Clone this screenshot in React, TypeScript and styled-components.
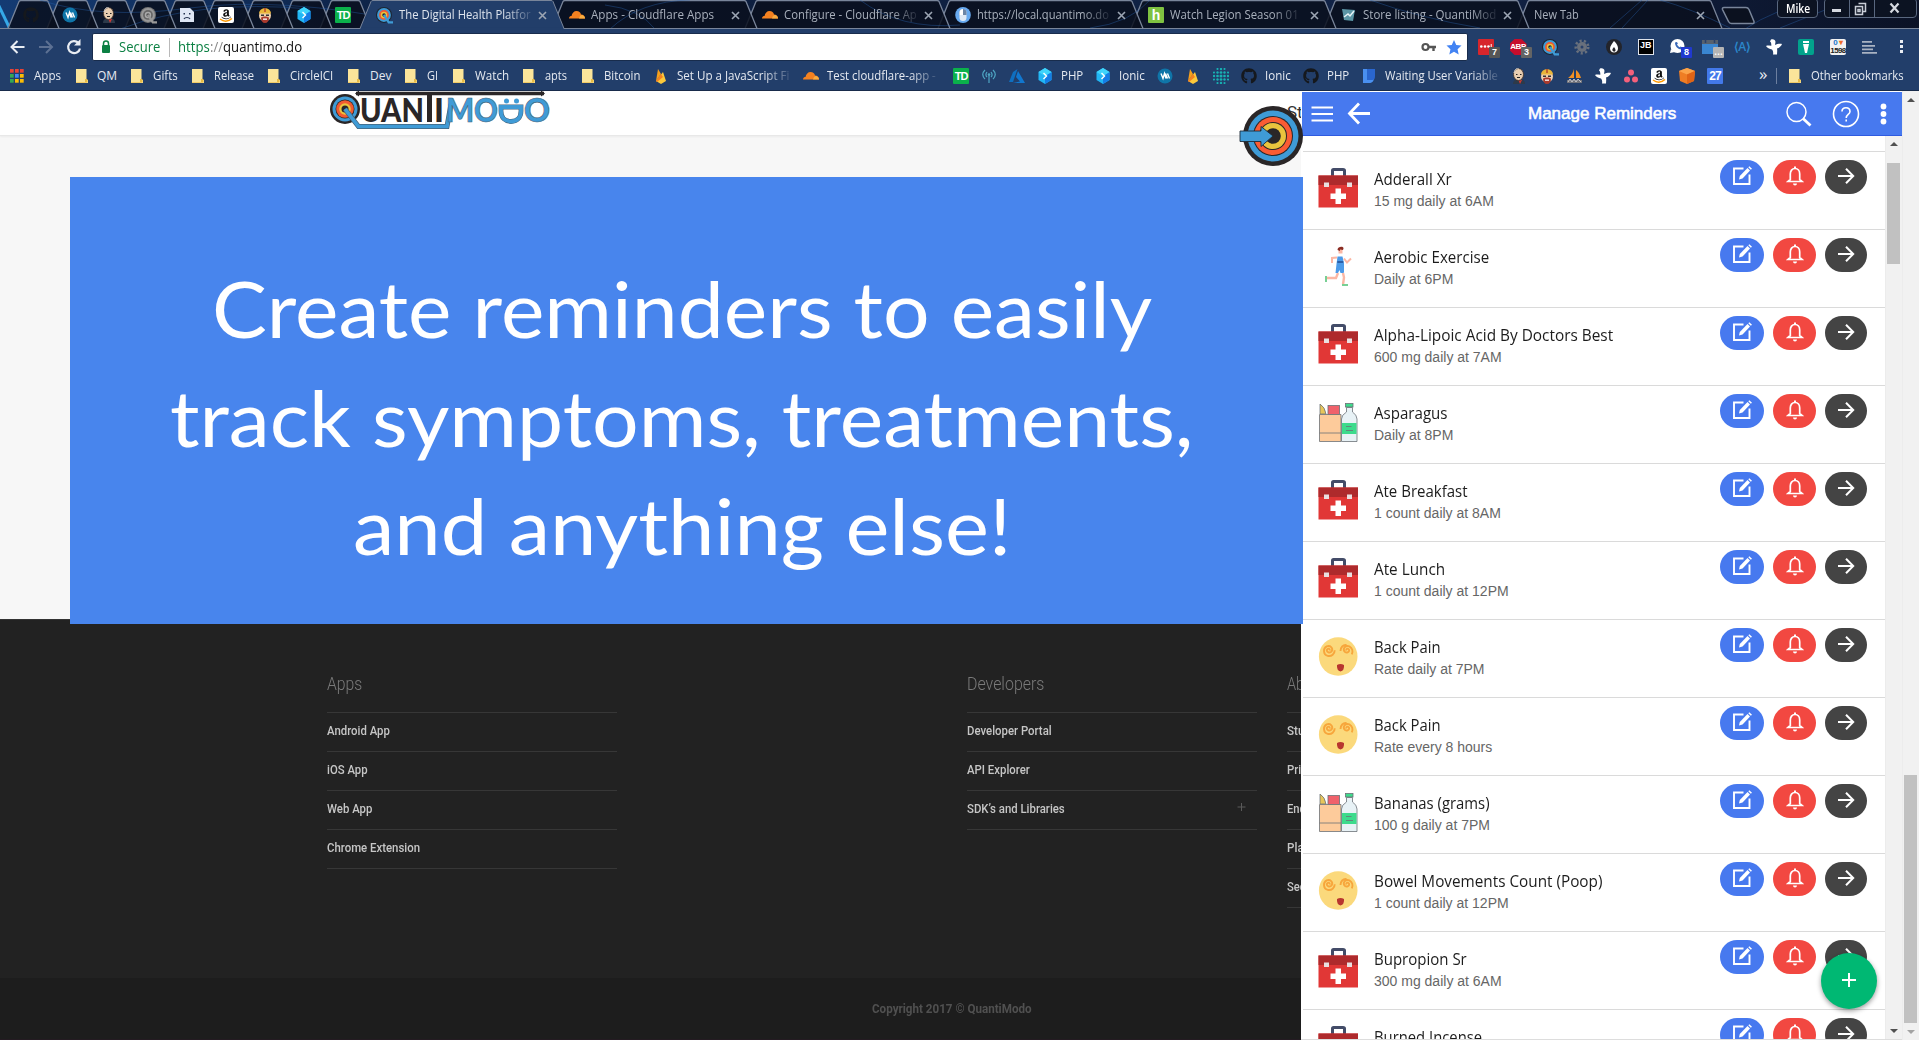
import React, { useLayoutEffect, useRef, useState } from 'react';
import styled, { createGlobalStyle } from 'styled-components';
import { FaGithub, FaAmazon } from 'react-icons/fa';

const Global = createGlobalStyle`
  * { box-sizing: border-box; }
  html, body { margin: 0; padding: 0; overflow: hidden; background: #f7f7f7; }
  svg { display: block; flex: none; }
`;

const UI = '"Open Sans", "Noto Sans", sans-serif';
const ARIAL = '"Liberation Sans", Arial, sans-serif';
const ROBOTO = 'Roboto, "Liberation Sans", sans-serif';

/* Text squeezed or widened to a known advance width */
const FitBox = styled.span<{ $w: number; $fade?: boolean }>`
  display: block;
  flex: none;
  width: ${p => p.$w}px;
  white-space: pre;
  ${p => p.$fade && `
    overflow: hidden;
    mask-image: linear-gradient(90deg, #000 ${p.$w - 26}px, rgba(0,0,0,.15) 100%);
  `}
`;
const FitInner = styled.span`
  display: inline-block;
  transform-origin: 0 50%;
`;
function Fit({ w, fade, children }: { w: number; fade?: boolean; children: string }) {
  const ref = useRef<HTMLSpanElement>(null);
  const [scale, setScale] = useState(1);
  useLayoutEffect(() => {
    if (ref.current) setScale(w / ref.current.offsetWidth);
  }, [w, children]);
  return (
    <FitBox $w={w} $fade={fade}>
      <FitInner ref={ref} style={{ transform: `scaleX(${scale})` }}>{children}</FitInner>
    </FitBox>
  );
}

/* ---------- small browser icons ---------- */
function Target16({ grey }: { grey?: boolean }) {
  const c = grey ? ['#777', '#999', '#666', '#aaa', '#555'] : ['#1d2531', '#3f9bd6', '#f15a31', '#eac43d', '#1d2531'];
  return (
    <svg width="17" height="17" viewBox="0 0 16 16">
      <circle cx="7.5" cy="7.5" r="7.5" fill={c[0]} /><circle cx="7.5" cy="7.5" r="6.5" fill={c[1]} />
      <circle cx="7.5" cy="7.5" r="4.6" fill={c[2]} /><circle cx="7.5" cy="7.5" r="3" fill={c[3]} />
      <circle cx="7.5" cy="7.5" r="1.6" fill={c[4]} /><path d="M7.5 7.5L12 14.5H16" stroke={c[1]} strokeWidth="2.2" fill="none" />
    </svg>
  );
}
const Letter = styled.span<{ $bg: string; $c?: string; $s?: number }>`
  display: flex; align-items: center; justify-content: center; flex: none;
  width: 16px; height: 16px; border-radius: 1px;
  background: ${p => p.$bg}; color: ${p => p.$c || '#fff'};
  font: 700 ${p => p.$s || 11}px/16px ${ARIAL}; letter-spacing: -1px;
`;
function Glyph({ n }: { n: string }) {
  const S = (kids: React.ReactNode, w = 16) => <svg width={w} height={w} viewBox="0 0 16 16">{kids}</svg>;
  switch (n) {
    case 'github': return <FaGithub size={16} color="#15181d" />;
    case 'wave': return S(<><circle cx="8" cy="8" r="7.5" fill="#0f75a8" /><path d="M4 5.5l2 5 1.5-5 1.5 5M8.500 5.500l2 5M10.500 5.500l2 5" stroke="#fff" strokeWidth="1.4" fill="none" /></>);
    case 'jenkins': return S(<><path d="M2 16c0-4 3-5 6-5s6 1 6 5z" fill="#2d3a4a" /><path d="M7 11l2 5 2-4z" fill="#d33833" /><ellipse cx="7.500" cy="6.500" rx="5" ry="6" fill="#e8cdb0" stroke="#3b2b22" strokeWidth=".8" /><path d="M3 5c1-4 3-5 5-5" stroke="#ddd" fill="none" /><path d="M5 6.500h1.500M9 6.500h1.500M6 9.500h3" stroke="#222" strokeWidth="1" /></>);
    case 'target': return <Target16 />;
    case 'targetgrey': return <Target16 grey />;
    case 'sad': return S(<><path d="M1 1h10l4 4v10H1z" fill="#dfe7f5" /><path d="M4.500 6h1.500v1.500H4.500zM10 6h1.500v1.500H10z" fill="#23324f" /><path d="M5 12c1-2 5-2 6 0" stroke="#23324f" fill="none" strokeWidth="1.200" /></>);
    case 'amazon': return S(<><rect width="16" height="16" rx="2" fill="#fff" /><g transform="translate(2.500 1.500)"><FaAmazon size={11.500} color="#111" /></g><path d="M2 12c4 3 8 3 12-.5" stroke="#f90" strokeWidth="1.500" fill="none" /></>);
    case 'worker': return S(<><circle cx="8" cy="8.500" r="6" fill="#f0d0ae" /><path d="M2 6.500C2.500 -.5 13.500 -.5 14 6.500z" fill="#e9b63a" /><path d="M8 1v4" stroke="#b5482a" strokeWidth="1.500" /><path d="M4 10.500c2-1.500 6-1.500 8 0 0 3.500-1.500 5.500-4 5.500s-4-2-4-5.500z" fill="#a93a2d" /><path d="M4 7.500h3v1.500H4zM9 7.500h3v1.500H9z" fill="#333" /><path d="M6 11.500h4v1.300H6z" fill="#fff" /></>);
    case 'hex': return S(<><path d="M8 0l6.500 4v8L8 16l-6.500-4V4z" fill="#21b6f5" /><path d="M8 8l6.500-4v8L8 16z" fill="#157de6" /><path d="M1.500 4L8 0l6.500 4L8 8z" fill="#3fd4fb" /><path d="M6.500 5l3 3-3 3" stroke="#fff" strokeWidth="1.400" fill="none" /></>);
    case 'td': return <Letter $bg="#0bb14b">TD</Letter>;
    case 'cloud': return S(<><path d="M0 11.500c0-2 1.500-2.500 2.500-2.500C3 6 5 4 7.500 4c2.500 0 4 1.500 4.500 3.500 2.500 0 4 2 4 4z" fill="#f48120" /><path d="M10 11.500c.5-2 1.500-3.500 3-3.500 2 .3 3 2 3 3.500z" fill="#faad3f" /></>);
    case 'mouse': return S(<><ellipse cx="8" cy="8" rx="7.800" ry="8" fill="#68aaf0" /><rect x="4.500" y="2" width="7" height="12" rx="3.500" fill="#dfe9f5" /><path d="M4.500 8V5.500a3.500 3.500 0 017 0V8z" fill="#6d86a6" /><path d="M4.500 8V5.500A3.500 3.500 0 018 2v6z" fill="#fff" /></>);
    case 'h': return <Letter $bg="#7fc241" $s={14}>h</Letter>;
    case 'store': return S(<><path d="M1 2l13 1-2 11-9-1z" fill="#5b95a5" /><path d="M3 10l4-3 2 2 4-5" stroke="#e8f4f8" strokeWidth="1.500" fill="none" /></>);
    case 'apps': return (
      <svg width="14" height="14" viewBox="0 0 14 14">
        {['#e84335', '#e84335', '#e84335', '#34a853', '#4285f4', '#fbbc05', '#34a853', '#fbbc05', '#fbbc05'].map((c, i) => (
          <rect key={i} x={(i % 3) * 5} y={Math.floor(i / 3) * 5} width="3.700" height="3.700" fill={c} />))}
      </svg>);
    case 'folder': return <svg width="12" height="14" viewBox="0 0 12 14"><path d="M0 0h10.500v11H12v3H0z" fill="#fbe59a" /><path d="M9 10h2.500v3.500H9z" fill="#e8bb45" /><path d="M0 13.500h11" stroke="#f1cb67" /></svg>;
    case 'fire': return S(<><path d="M3 13L5 1l3 5z" fill="#f7a01b" /><path d="M3 13l7-9 3 9-5 3z" fill="#fdc93a" /><path d="M3 13l5-7 2 3-6 5z" fill="#f58220" /></>);
    case 'antenna': return S(<><g stroke="#4fa6c4" fill="none" strokeWidth="1.200"><path d="M4 2C1 5 1 8 4 11M12 2c3 3 3 6 0 9M6 4C4.500 6 4.500 7.500 6 9M10 4c1.500 2 1.500 3.500 0 5M8 7v8" /></g><circle cx="8" cy="6.500" r="1.300" fill="#4fa6c4" /></>);
    case 'azure': return S(<><path d="M8.500 1L4 4 0 14h4z" fill="#0f6fc0" /><path d="M9 3l7 12H4l7-1.500L7 9z" fill="#1177cf" /></>);
    case 'dots': return S([1, 4.5, 8, 11.5, 15].flatMap((x, i) => [1, 4.5, 8, 11.5, 15].map((y, j) => (
      Math.abs(i - 2) + Math.abs(j - 2) < 4 ? <circle key={`${i}-${j}`} cx={x} cy={y} r={1.500 - (Math.abs(i - 2) + Math.abs(j - 2)) * 0.150} fill="#18b1b3" /> : null))));
    case 'doc': return S(<><path d="M2 1h11v9c0 3-2 5-5 5H2z" fill="#4a90f0" /><path d="M6 1h8v7c0 3-1 4-3 4H6z" fill="#2a66cf" /></>);
    case 'pma': return S(<><path d="M7 1v9H1c3-2 5-5 6-9zM9 2c3 2 4 5 5 8H9z" fill="#f29023" /><path d="M0 12h15v3H0z" fill="#70727a" /><path d="M1 14l2-3 2 3 2-3 2 3 2-3 3 3" stroke="#c5c6cb" fill="none" /></>);
    case 'bird': return S(<path d="M5 .5c2-.8 4.500 0 4.500 2.500L9 6c2-1 5-1.500 7-1-1 2.500-3 4-5 4.500.5 2 0 3.500 0 6H7c.5-2 0-4-1-5C3.500 10 1 9 0 7c2-1 4 0 5.500-.5C5 5 5.500 3.500 4 2.500z" fill="#fff" />);
    case 'asana': return S(<g fill="#f4607b"><circle cx="8" cy="4.500" r="3" /><circle cx="4" cy="11.500" r="3" /><circle cx="12" cy="11.500" r="3" /></g>);
    case 'box': return S(<><path d="M8 0l8 3-1 10-7 3-7-3L0 3z" fill="#ef7d24" /><path d="M0 3l8-3 8 3-8 3.500z" fill="#fba349" /><path d="M8 6.500L16 3l-1 10-7 3z" fill="#e06416" /></>);
    case 'cal27': return <Letter $bg="#4379ea" $s={12}>27</Letter>;
    case 'lastpass': return S(<><rect width="16" height="16" rx="1" fill="#d7262c" /><g fill="#fff"><circle cx="3.300" cy="7.500" r="1.300" /><circle cx="7" cy="7.500" r="1.300" /><circle cx="10.500" cy="7.500" r="1.300" /><path d="M12.700 5h1v5h-1z" /></g></>);
    case 'abp': return <Abp>ABP</Abp>;
    case 'gear': return S(<><circle cx="8" cy="8" r="5" fill="#69707c" /><circle cx="8" cy="8" r="6.300" fill="none" stroke="#69707c" strokeWidth="2.500" strokeDasharray="2.200 2.200" /><circle cx="8" cy="8" r="1.500" fill="#29406a" /></>);
    case 'flame': return S(<><circle cx="8" cy="8" r="8" fill="#23242a" /><path d="M8 2c3 3 4 5 4 7.500S10 13.500 8 13.500 4 12 4 9.500 6 5 8 2z" fill="#fff" /><path d="M8 8c1 1.500 1.500 2 1.500 3.500S7 13 6.500 11.500 7 9.500 8 8z" fill="#23242a" /></>);
    case 'jb': return <Jb>JB</Jb>;
    case 'phone': return S(<><circle cx="7.500" cy="7" r="7" fill="#fff" /><path d="M1 10l-1 4 5-1z" fill="#fff" /><path d="M5 3.500c0 4 3 7 6.500 7l1-2-2-1-1 .8C8.500 7.500 7.500 6.500 7 5.500l.9-1-1-1.500z" fill="#3868b8" /></>);
    case 'cal': return S(<><rect y="1" width="16" height="14" fill="#3a86d1" /><rect y="1" width="16" height="4" fill="#56616e" /><path d="M3.500 0v4M12.500 0v4" stroke="#29406a" strokeWidth="1.500" /></>);
    case 'green': return S(<><rect width="16" height="16" rx="2" fill="#02a28c" /><path d="M5 2h6v2H5zM5 5h6l-2 9H7z" fill="#fff" /></>);
    case 'lines': return S(<g fill="#a9b2c2"><path d="M0 2h10v1.800H0zM0 6h13v1.800H0zM0 9.500h11v1.800H0zM0 13h15v1.800H0z" /></g>);
    default: return null;
  }
}
const Abp = styled.span`
  display: flex; align-items: center; justify-content: center; flex: none;
  width: 17px; height: 16px; background: #c70d2c; color: #fff;
  clip-path: polygon(30% 0, 70% 0, 100% 30%, 100% 70%, 70% 100%, 30% 100%, 0 70%, 0 30%);
  font: 700 8px/16px ${ARIAL}; letter-spacing: -.4px;
`;
const Jb = styled.span`
  width: 16px; height: 16px; flex: none; background: #000; border: 1px solid #dfe3ea; color: #fff;
  font: 700 9px/9px ${ARIAL}; padding: 1px 0 0 1px;
`;

/* ---------- tab strip ---------- */
const Screen = styled.div`
  width: 1919px; height: 1040px; overflow: hidden; display: flex; flex-direction: column;
  font-family: ${UI};
`;
const Strip = styled.div`
  position: relative; height: 29px; flex: none; display: flex; padding-left: 11.5px; overflow: hidden;
  background: #0e1c38;
`;
const StripArt = styled.svg`position: absolute; left: 0; top: 0;`;
const Pin = styled.div`
  position: relative; width: 39px; flex: none; display: flex; justify-content: center; align-items: center; padding-top: 1px;
`;
const Tab = styled.div<{ $active?: boolean }>`
  position: relative; width: 193px; flex: none; display: flex; align-items: center; padding: 1px 9px 0 13px; gap: 6px;
  font-size: 12px; line-height: 20px; color: ${p => (p.$active ? '#dfe5ee' : '#a9b0bc')};
`;
const CloseX = styled.svg`margin-left: auto;`;
const UserBadge = styled.div`
  position: absolute; left: 1777px; top: -2px; width: 41px; height: 20px; border: 1px solid #59677f; border-radius: 4px;
  background: #0c1322; color: #fff; font-size: 12px; line-height: 20px; display: flex; justify-content: center; font-weight: 600;
`;
const WinCtl = styled.div`
  position: absolute; left: 1824px; top: -2px; width: 93px; height: 20px; border: 1px solid #59677f; border-radius: 4px;
  background: #0c1322;
`;
const PINS = ['github', 'wave', 'jenkins', 'targetgrey', 'sad', 'amazon', 'worker', 'hex', 'td'];
const TABS: { icon?: string; t: string; w: number; fade?: boolean }[] = [
  { icon: 'target', t: 'The Digital Health Platfor', w: 132, fade: true },
  { icon: 'cloud', t: 'Apps - Cloudflare Apps', w: 123 },
  { icon: 'cloud', t: 'Configure - Cloudflare Ap', w: 133, fade: true },
  { icon: 'mouse', t: 'https://local.quantimo.do', w: 132, fade: true },
  { icon: 'h', t: 'Watch Legion Season 01', w: 129, fade: true },
  { icon: 'store', t: 'Store listing - QuantiMod', w: 133, fade: true },
  { t: 'New Tab', w: 45 },
];
const tabPath = (s: number, w: number) => `M${s - 4} 28.500L${s + 7} 1.500Q${s + 7.500} .5 ${s + 9} .5H${s + w - 5}Q${s + w - 3.500} .5 ${s + w - 3} 1.500L${s + w + 8} 28.500`;
function TabStrip() {
  const shapes = [
    ...PINS.map((_, i) => tabPath(12 + i * 39, 39)),
    ...TABS.slice(1).map((_, i) => tabPath(556 + i * 193, 193)),
  ].reverse();
  return (
    <Strip>
      <StripArt width="1919" height="29">
        <defs>
          <linearGradient id="sk" x1="0" x2="1"><stop offset="0" stopColor="#143b73" /><stop offset=".25" stopColor="#0c1d3c" /><stop offset=".75" stopColor="#122448" /><stop offset="1" stopColor="#0b1226" /></linearGradient>
        </defs>
        <rect width="1919" height="29" fill="url(#sk)" />
        <path d="M-4 0L10 29" stroke="#35a8e8" strokeWidth="3" />
        {shapes.map((d, i) => <path key={i} d={d} fill="#090f1d" fillOpacity=".85" stroke="#79859a" strokeWidth="1.300" />)}
        <g stroke="#2a66b5" fill="none" opacity=".38">
          <path d="M40 0q60 20 150 8t220 14M120 29q80-30 190-20M610 29q30-28 80-29M655 29q-15-20-50-24M860 0q40 30 100 25M1090 28q40-5 60-28M1610 28l32-28M1622 28l26-28M1480 28q-60-10-110-28M1660 0q30 8 70 28M1745 29q30-20 70-28M1780 28l50-20" />
        </g>
        <path d="M0 28.500H1919" stroke="#79859a" />
        <path d="M1724 7.500h22q2 0 3 2l5 12q.5 2-1.500 2h-21q-2 0-3-2l-6-12q-.5-2 1.500-2z" fill="#0b111f" stroke="#79859a" strokeWidth="1.500" />
        <path d={`${tabPath(364, 192)}V30H360z`} fill="#223e6a" stroke="#79859a" />
        <path d="M361 29H563" stroke="#223e6a" strokeWidth="2.500" />
      </StripArt>
      {PINS.map(p => <Pin key={p}><Glyph n={p} /></Pin>)}
      {TABS.map((t, i) => (
        <Tab key={t.t} $active={i === 0}>
          {t.icon && <Glyph n={t.icon} />}
          <Fit w={t.w} fade={t.fade}>{t.t}</Fit>
          <CloseX width="9" height="9"><path d="M1 1l7 7M8 1l-7 7" stroke="#9ca5b3" strokeWidth="1.600" /></CloseX>
        </Tab>
      ))}
      <UserBadge><Fit w={24}>Mike</Fit></UserBadge>
      <WinCtl>
        <svg width="91" height="18">
          <path d="M24.500 0v18M49.500 0v18" stroke="#59677f" />
          <path d="M7 10h9v3H7z" fill="#d5d9e0" />
          <path d="M33.500 4.500h7v8h-3M30.500 7.500h7v8h-7zM33 10.500h2v2h-2z" stroke="#c9ced7" strokeWidth="1.500" fill="none" />
          <path d="M65.500 4.500l8 9M73.500 4.500l-8 9" stroke="#d5d9e0" strokeWidth="2.200" />
        </svg>
      </WinCtl>
    </Strip>
  );
}

/* ---------- toolbar ---------- */
const Toolbar = styled.div`
  height: 32px; flex: none; background: #223e6a; display: flex; align-items: center; padding-top: 4px;
`;
const Nav = styled.div`width: 92px; flex: none;`;
const Omnibox = styled.div`
  width: 1376px; height: 28px; flex: none; background: #fff; border: 1px solid #182c4c; border-radius: 2px; display: flex; align-items: center;
  padding: 0 5px 0 7px; font-size: 14px; line-height: 24px; color: #0b8043;
`;
const Sep = styled.i<{ $c: string; $h: number }>`
  width: 1px; height: ${p => p.$h}px; background: ${p => p.$c}; flex: none;
`;
const Gap = styled.i<{ $w: number }>`width: ${p => p.$w}px; flex: none;`;
const Url = styled.span`display: flex; margin-left: 8px; color: #111;`;
const Scheme = styled.span`color: #0b8043;`;
const Slashes = styled.span`color: #888;`;
const OmniEnd = styled.div`margin-left: auto; display: flex; gap: 9px; align-items: center;`;
const Ext = styled.div`position: relative; width: 32px; flex: none; display: flex; justify-content: center; align-items: center;`;
const Badge = styled.span<{ $bg: string }>`
  position: absolute; left: 19px; top: 8px; width: 11px; height: 11px; border-radius: 1px; background: ${p => p.$bg}; color: #fff;
  font: 700 9px/11px ${ARIAL}; text-align: center;
`;
const ExtText = styled.span`color: #2b86c9; font: 600 12px/16px ${UI}; letter-spacing: -.5px;`;
const Counter = styled.span`
  width: 16px; height: 16px; background: #f2f2f2; border-radius: 2px; color: #222; font: 700 8px/8px ${ARIAL}; text-align: center; letter-spacing: -.6px;
`;
const CounterTop = styled.span`color: #2377c9; display: block; i { color: #ef6c2b; font-style: normal; margin-left: 2px; }`;
const EXTS: { n: string; b?: string; bg?: string }[] = [
  { n: 'lastpass', b: '7', bg: '#565656' }, { n: 'abp', b: '3', bg: '#646464' }, { n: 'target' }, { n: 'gear' }, { n: 'flame' }, { n: 'jb' },
  { n: 'phone', b: '8', bg: '#2039cf' }, { n: 'cal', b: '…', bg: '#b5b5b5' }, { n: 'text' }, { n: 'bird' }, { n: 'green' }, { n: 'count' }, { n: 'lines' },
];
function BrowserToolbar() {
  return (
    <Toolbar>
      <Nav>
        <svg width="92" height="26" viewBox="0 0 92 26" fill="none" strokeWidth="2">
          <path d="M24.500 13H12M17.500 7l-6 6 6 6" stroke="#e9edf3" />
          <path d="M39 13h12.500M46 7l6 6-6 6" stroke="#5d7193" />
          <path d="M78.500 9A6 6 0 1 0 80 14.500" stroke="#e9edf3" strokeWidth="2.200" />
          <path d="M80.500 5v6.500H74z" fill="#e9edf3" />
        </svg>
      </Nav>
      <Omnibox>
        <svg width="19" height="16"><rect x="2" y="6" width="8" height="8" rx="1" fill="#0b8043" /><path d="M3.500 6V4.500a2.500 2.500 0 015 0V6" fill="none" stroke="#0b8043" strokeWidth="1.500" /></svg>
        <Fit w={41}>Secure</Fit>
        <Gap $w={9} /><Sep $c="#b9b9b9" $h={19} />
        <Url><Scheme><Fit w={32}>https</Fit></Scheme><Slashes><Fit w={13}>://</Fit></Slashes><Fit w={79}>quantimo.do</Fit></Url>
        <OmniEnd>
          <svg width="16" height="12"><circle cx="4.500" cy="6" r="3" fill="none" stroke="#555" strokeWidth="2.200" /><path d="M7.500 6H15M12.500 6v4" stroke="#555" strokeWidth="2.400" /></svg>
          <svg width="16" height="15" viewBox="0 0 24 24"><path d="M12 0l3.600 8 8.400.9-6.300 5.700 1.800 8.400L12 18.800 4.500 23l1.800-8.400L0 8.900 8.400 8z" fill="#4283f3" /></svg>
        </OmniEnd>
      </Omnibox>
      <Gap $w={2} />
      {EXTS.map(e => (
        <Ext key={e.n}>
          {e.n === 'text' ? <ExtText>⟨A⟩</ExtText> : e.n === 'count' ? <Counter><CounterTop>0<i>▾</i></CounterTop>1598</Counter> : <Glyph n={e.n} />}
          {e.b && <Badge $bg={e.bg!}>{e.b}</Badge>}
        </Ext>
      ))}
      <Ext><svg width="4" height="14"><g fill="#e9edf3"><rect y="0" width="3" height="3" /><rect y="5" width="3" height="3" /><rect y="10" width="3" height="3" /></g></svg></Ext>
    </Toolbar>
  );
}

/* ---------- bookmarks ---------- */
const Bar = styled.div`
  height: 30px; flex: none; background: #223e6a; border-bottom: 1px solid #182b4b; display: flex; align-items: center; padding-left: 10px;
  font-size: 12px; line-height: 18px; color: #e6eaf1;
`;
const Mark = styled.div<{ $w: number }>`
  width: ${p => p.$w}px; flex: none; display: flex; align-items: center;
`;
const MarkIcon = styled.span<{ $w: number }>`width: ${p => p.$w}px; flex: none; display: flex;`;
/* icon, cell width, icon slot width, label, label width, faded end */
type M = [string, number, number?, string?, number?, boolean?];
const MARKS: M[] = [
  ['apps', 66, 24, 'Apps', 27], ['folder', 55, 21, 'QM', 20], ['folder', 61, 22, 'Gifts', 25], ['folder', 76, 22, 'Release', 40],
  ['folder', 80, 22, 'CircleICI', 43], ['folder', 57, 22, 'Dev', 21], ['folder', 48, 22, 'GI', 11], ['folder', 70, 22, 'Watch', 34],
  ['folder', 59, 22, 'apts', 22], ['folder', 71, 22, 'Bitcoin', 36],
  ['fire', 150, 24, 'Set Up a JavaScript Fi', 112, true], ['cloud', 150, 24, 'Test cloudflare-app -', 109, true],
  ['td', 28], ['antenna', 28], ['azure', 28], ['hex', 58, 24, 'PHP', 22], ['hex', 62, 24, 'Ionic', 26], ['wave', 28], ['fire', 28], ['dots', 28],
  ['github', 62, 24, 'Ionic', 26], ['github', 58, 24, 'PHP', 22], ['doc', 150, 24, 'Waiting User Variable', 113, true],
  ['jenkins', 28], ['worker', 28], ['pma', 28], ['bird', 28], ['asana', 28], ['amazon', 28], ['box', 28], ['cal27', 52],
];
const More = styled.span`width: 17px; font-size: 17px; line-height: 16px; padding-bottom: 3px;`;
function Bookmarks() {
  return (
    <Bar>
      {MARKS.map(([n, w, s, t, tw, f], i) => (
        <Mark key={i} $w={w}>
          <MarkIcon $w={s || 16}><Glyph n={n} /></MarkIcon>
          {t && <Fit w={tw!} fade={f}>{t}</Fit>}
        </Mark>
      ))}
      <More>»</More><Sep $c="#6c7f9f" $h={16} /><Gap $w={12} />
      <MarkIcon $w={22}><Glyph n="folder" /></MarkIcon><Fit w={93}>Other bookmarks</Fit>
    </Bar>
  );
}

/* ---------- web page ---------- */
const Body = styled.div`height: 949px; flex: none; display: flex; background: #f7f7f7;`;
const Site = styled.div`position: relative; width: 1301px; flex: none; display: flex; flex-direction: column;`;
const SiteHeader = styled.header`
  height: 45px; flex: none; background: #fff; border-bottom: 1px solid #e8e8e8; box-shadow: 0 1px 2px rgba(0,0,0,.05);
  display: flex; justify-content: space-between; padding-left: 328px; overflow: hidden;
`;
const NavWord = styled.span`width: 14px; overflow: hidden; white-space: nowrap; font: 400 17px/43px ${ROBOTO}; color: #333;`;
const FloatTarget = styled.svg`position: absolute; left: 1239px; top: 14px; z-index: 3;`;
const Hero = styled.section`
  position: relative; z-index: 2; margin: 41px 0 0 70px; width: 1233px; height: 447px; flex: none; background: #4885ed; color: #fff;
  display: flex; flex-direction: column; align-items: center; padding: 77px 10px 0 0;
  font: 400 78px/108.500px Lato, "Open Sans", sans-serif;
`;
const Footer = styled.footer`
  flex: 1; margin-top: -5px; background: #222; border-top: 1px solid #333; display: flex; flex-direction: column; overflow: hidden;
`;
const Columns = styled.div`height: 358px; flex: none; display: flex; padding: 46px 0 0 327px;`;
const Column = styled.div<{ $mr: number }>`width: 290px; flex: none; margin-right: ${p => p.$mr}px;`;
const ColHead = styled.h3`
  margin: 0; height: 47px; border-bottom: 1px solid #373737; font: 300 18px/35px ${ROBOTO}; color: #7a7a7a;
`;
const ColLink = styled.div`
  height: 39px; border-bottom: 1px solid #373737; font: 500 13px/36px ${ROBOTO}; color: #c6c6c6; display: flex; justify-content: space-between;
  align-items: center; padding: 0 11px 2px 0;
`;
const Copyright = styled.div`
  flex: 1; background: #1d1d1d; display: flex; padding: 21px 0 0 872px; font: 700 12.500px/20px ${ROBOTO}; color: #505050; border-bottom: 1px solid #241b22;
`;
const COLS: { h: string; w: number; mr: number; links: [string, number][] }[] = [
  { h: 'Apps', w: 35, mr: 350, links: [['Android App', 63], ['iOS App', 41], ['Web App', 45.5], ['Chrome Extension', 93]] },
  { h: 'Developers', w: 77, mr: 30, links: [['Developer Portal', 85], ['API Explorer', 63], ['SDK’s and Libraries', 98]] },
  { h: 'Ab', w: 17, mr: 0, links: [['Stu', 17], ['Pri', 14], ['End', 19], ['Pla', 17], ['Sec', 19]] },
];

function Logo() {
  return (
    <svg width="224" height="40" viewBox="328 91 224 40">
      <path d="M356 93.500H544" stroke="#2a2627" strokeWidth="3.600" />
      <path d="M355 93.500l4-3v6zM545 93.500l-4-3v6z" fill="#2a2627" />
      <circle cx="345" cy="109" r="15" fill="#2a2627" /><circle cx="345" cy="109" r="12.500" fill="#3f9bd6" /><circle cx="345" cy="109" r="9.500" fill="#2a2627" />
      <circle cx="345" cy="109" r="8.800" fill="#f15a31" /><circle cx="345" cy="109" r="5.800" fill="#eac43d" /><circle cx="345" cy="109" r="3.500" fill="#2a2627" />
      <g fontFamily="Lato, sans-serif" fontWeight="900" fontSize="32" fill="#2a2627">
        <text x="360" y="122" textLength="64" lengthAdjust="spacingAndGlyphs">UAN</text>
        <text x="434" y="122" textLength="10" lengthAdjust="spacingAndGlyphs">I</text>
      </g>
      <path d="M429.500 93V122" stroke="#2a2627" strokeWidth="5" />
      <path d="M345 109L358.500 126.500H447L451 104" stroke="#46637a" strokeWidth="5" fill="none" />
      <path d="M345 109L358.500 126.500H447L451 104" stroke="#3f9bd6" strokeWidth="3.600" fill="none" />
      <g fontFamily="Lato, sans-serif" fontWeight="900" fontSize="32" fill="#3f9bd6" stroke="#46637a" strokeWidth=".6">
        <text x="446" y="122" textLength="52" lengthAdjust="spacingAndGlyphs">MO</text>
        <text x="524" y="122" textLength="26" lengthAdjust="spacingAndGlyphs">O</text>
      </g>
      <path d="M501 107h20v4c0 7-4.500 10.500-10 10.500S501 118 501 111z" fill="none" stroke="#46637a" strokeWidth="4.800" />
      <path d="M501 107h20v4c0 7-4.500 10.500-10 10.500S501 118 501 111z" fill="none" stroke="#3f9bd6" strokeWidth="3.800" />
      <circle cx="506.500" cy="101" r="2.500" fill="#3f9bd6" /><circle cx="516.500" cy="101" r="2.500" fill="#3f9bd6" />
    </svg>
  );
}

function SiteView() {
  return (
    <Site>
      <SiteHeader><Logo /><NavWord>St</NavWord></SiteHeader>
      <FloatTarget width="65" height="62" viewBox="0 0 65 62">
        <circle cx="34" cy="31" r="30" fill="#2a2627" /><circle cx="34" cy="31" r="25.500" fill="#3f9bd6" /><circle cx="34" cy="31" r="20" fill="#2a2627" />
        <circle cx="34" cy="31" r="19" fill="#fa5c34" /><circle cx="34" cy="31" r="14" fill="#2a2627" /><circle cx="34" cy="31" r="13" fill="#eac43d" /><circle cx="34" cy="31" r="7.800" fill="#2a2627" />
        <path d="M1 26H22V21.500L34 31 22 41.500V36.500H1z" fill="#3f9bd6" stroke="#1e2b38" strokeWidth=".9" />
      </FloatTarget>
      <Hero>
        <Fit w={940}>Create reminders to easily</Fit>
        <Fit w={1024}>track symptoms, treatments,</Fit>
        <Fit w={658}>and anything else!</Fit>
      </Hero>
      <Footer>
        <Columns>
          {COLS.map(c => (
            <Column key={c.h} $mr={c.mr}>
              <ColHead><Fit w={c.w}>{c.h}</Fit></ColHead>
              {c.links.map(([t, w]) => (
                <ColLink key={t}><Fit w={w}>{t}</Fit>{t.startsWith('SDK') && <svg width="9" height="14"><path d="M4.500 1v8M.5 5h8" stroke="#5a5a5a" /></svg>}</ColLink>
              ))}
            </Column>
          ))}
        </Columns>
        <Copyright><Fit w={160}>Copyright 2017 © QuantiModo</Fit></Copyright>
      </Footer>
    </Site>
  );
}

/* ---------- reminders panel ---------- */
const Panel = styled.aside`
  position: relative; width: 601px; flex: none; background: #fff; padding: 1px 0 0 1px; display: flex; flex-direction: column;
  border-bottom: 1px solid #ddd; overflow: hidden;
`;
const PanelHead = styled.div`
  height: 44px; flex: none; background: #4779ef; border-bottom: 1px solid #2f5be0; display: flex; align-items: center; color: #fff;
  font: 400 17px/24px ${ARIAL}; -webkit-text-stroke: .55px #fff;
`;
const PanelMain = styled.div`flex: 1; display: flex; min-height: 0;`;
const List = styled.div`width: 583px; flex: none; overflow: hidden; padding-left: 1px;`;
const ListTop = styled.div`height: 16px; border-bottom: 1px solid #dadada;`;
const Row = styled.div`height: 78px; border-bottom: 1px solid #dadada; display: flex; padding-left: 14px;`;
const Pic = styled.div`width: 42px; padding-top: 15px;`;
const Texts = styled.div`margin: 16px auto 0 15px;`;
const Name = styled.div`font: 400 15.500px/23px ${UI}; color: #1c1c1c;`;
const Detail = styled.div`font: 400 14px/17px ${ARIAL}; color: #666; margin-top: 2px; white-space: nowrap;`;
const Btns = styled.div`display: flex; gap: 9px; padding: 8px 18px 0 0;`;
const Pill = styled.button<{ $bg: string; $w: number }>`
  width: ${p => p.$w}px; height: 34px; border: 0; padding: 0 0 2px; border-radius: 17px; background: ${p => p.$bg};
  display: flex; align-items: center; justify-content: center;
`;
const Track = styled.div<{ $pt: number }>`
  width: 17px; flex: none; background: #f1f1f1; border-left: 1px solid #ececec; display: flex; flex-direction: column; align-items: center;
  padding: ${p => p.$pt}px 1px 6px 0;
`;
const Thumb = styled.div<{ $h: number; $mt: number }>`width: 13px; height: ${p => p.$h}px; margin-top: ${p => p.$mt}px; background: #c1c1c1;`;
const Fab = styled.button`
  position: absolute; right: 25px; bottom: 30px; width: 56px; height: 56px; border: 0; border-radius: 50%; background: #00b873;
  box-shadow: 0 2px 5px rgba(0,0,0,.4); padding: 0 0 2px; display: flex; align-items: center; justify-content: center;
`;

const Kit = () => (
  <svg width="42" height="42" viewBox="0 0 42 42">
    <path d="M15.500 10V3.500Q15.500 2.500 16.500 2.500H26Q27.500 2.500 27.500 3.500V10" fill="none" stroke="#434c68" strokeWidth="3" />
    <rect x="1.500" y="8.500" width="39.500" height="32" fill="#e13736" /><rect x="1.500" y="8.500" width="39.500" height="9.500" fill="#ae2a2c" />
    <path d="M7 15.500h5v4.500H7zM30 15.500h5v4.500h-5z" fill="#e9dfe0" />
    <path d="M18.500 21.500h5.500v5h5v5.500h-5v5h-5.500v-5h-5V26.500h5z" fill="#fff" />
  </svg>
);
const Runner = () => (
  <svg width="42" height="42" viewBox="0 0 42 42" fill="none">
    <path d="M20 12.500L15 13v5M27 13.500l3 4 4-4" stroke="#fbb7a4" strokeWidth="2" />
    <path d="M21 28l-2 5H10M26 28l1 4.500-1 7" stroke="#fbb7a4" strokeWidth="2.400" />
    <path d="M9 31v6M25 40h6" stroke="#78cf94" strokeWidth="2" />
    <path d="M20.500 11.500h5l1.500 7v8.500l-.5 1h-3l-1-3-1.500 3h-2.500l1-9z" fill="#4c9ae8" /><path d="M20.300 16h6v2h-6z" fill="#2b5fa8" />
    <path d="M21.500 3h4v5.500h-4z" fill="#fbb7a4" /><path d="M20.500 5c0-4 6.500-4 6-1.500l-.5 1.500-3-.5v1.500z" fill="#8a2c22" />
  </svg>
);
const Grocery = () => (
  <svg width="42" height="42" viewBox="0 0 42 42" stroke="#6b7177" strokeWidth=".8">
    <path d="M3 13V3q5 3 6 10z" fill="#e8c65a" /><rect x="11" y="4.500" width="11.500" height="9" fill="#f0626b" />
    <path d="M2.500 13.500H24V40.500H2.500z" fill="#fdcb9b" /><path d="M2.500 32H24" fill="none" />
    <path d="M29.500 6.500h6v4.500q4.500 3 4.500 7V40.500H24.500V18q0-4 5-7z" fill="#e8f2f6" />
    <rect x="28.500" y="2.500" width="7.500" height="3.500" fill="#3ddb8c" /><path d="M25 22h14.500v11H25z" fill="#3ddb8c" stroke="none" /><path d="M29 25.500h5.500M29 29.500h7" />
  </svg>
);
const Dizzy = () => (
  <svg width="42" height="42" viewBox="0 0 42 42" fill="none" stroke="#f7a63c" strokeWidth="1.900">
    <circle cx="21.200" cy="21.500" r="19.300" fill="#fbd97c" stroke="none" />
    <path d="M12.500 15.500c1-1.500-1.500-2.800-2.500-.8-1 2.500 3 4 4.700 1.500 1.800-3-1.500-6.200-5-4.800-4 2-3.500 8.500 1 9.500 4 .8 7-2 7-5.700" />
    <path d="M29.500 15.500c-1-1.500 1.500-2.800 2.500-.8 1 2.500-3 4-4.700 1.500-1.800-3 1.500-6.200 5-4.800 3 1.500 4 5 2.500 8M29.500 10c-3.500-.5-6 2.500-6 6" />
    <path d="M20 30q3.500-2 7 0 .5 5.500-3.500 6.500-4-1-3.500-6.500z" fill="#b8362f" stroke="none" />
  </svg>
);
const PICS = { kit: Kit, run: Runner, food: Grocery, dizzy: Dizzy };
const ROWS: [keyof typeof PICS, string, number, string][] = [
  ['kit', 'Adderall Xr', 78, '15 mg daily at 6AM'], ['run', 'Aerobic Exercise', 115, 'Daily at 6PM'],
  ['kit', 'Alpha-Lipoic Acid By Doctors Best', 239, '600 mg daily at 7AM'], ['food', 'Asparagus', 74, 'Daily at 8PM'],
  ['kit', 'Ate Breakfast', 94, '1 count daily at 8AM'], ['kit', 'Ate Lunch', 71, '1 count daily at 12PM'],
  ['dizzy', 'Back Pain', 67, 'Rate daily at 7PM'], ['dizzy', 'Back Pain', 67, 'Rate every 8 hours'],
  ['food', 'Bananas (grams)', 116, '100 g daily at 7PM'], ['dizzy', 'Bowel Movements Count (Poop)', 228, '1 count daily at 12PM'],
  ['kit', 'Bupropion Sr', 93, '300 mg daily at 6AM'], ['kit', 'Burned Incense', 108, ''],
];
const Arrow = ({ down, c = '#505050' }: { down?: boolean; c?: string }) => (
  <svg width="8" height="4"><path d={down ? 'M0 0h8L4 4z' : 'M0 4h8L4 0z'} fill={c} /></svg>
);
const DownSlot = styled.span`margin-top: auto;`;

function Reminders() {
  return (
    <Panel>
      <PanelHead>
        <svg width="226" height="43" viewBox="1302 92 226 43" fill="none" stroke="#fff">
          <path d="M1311.500 107.500H1333M1311.500 114H1333M1311.500 120.500H1333" strokeWidth="2" />
          <path d="M1370 113.500H1350M1359 103.500L1349.500 113.500L1359 123.500" strokeWidth="2.800" />
        </svg>
        <Fit w={148}>Manage Reminders</Fit>
        <svg width="226" height="43" viewBox="1676 92 226 43" fill="none" stroke="#fff">
          <circle cx="1796.500" cy="112" r="9.500" strokeWidth="1.500" /><path d="M1803 118.500L1810.500 125.500" strokeWidth="2.800" />
          <circle cx="1846" cy="114" r="12.500" strokeWidth="1.600" />
          <path d="M1842 111.500c0-5 8-5 8 0 0 3-3.800 3-3.800 6.500M1846.200 119.500v2" strokeWidth="1.600" />
          <g fill="#fff" stroke="none"><circle cx="1883.500" cy="106.500" r="2.900" /><circle cx="1883.500" cy="114" r="2.900" /><circle cx="1883.500" cy="121.500" r="2.900" /></g>
        </svg>
      </PanelHead>
      <PanelMain>
        <List>
          <ListTop />
          {ROWS.map(([k, name, w, detail], i) => {
            const P = PICS[k];
            return (
              <Row key={i}>
                <Pic><P /></Pic>
                <Texts><Name><Fit w={w}>{name}</Fit></Name><Detail>{detail}</Detail></Texts>
                <Btns>
                  <Pill $bg="#4779ef" $w={44}>
                    <svg width="20" height="20" viewBox="0 0 20 20"><path d="M11.500 2.500H2V18H17.500V8.500" fill="none" stroke="#fff" strokeWidth="1.900" /><path d="M7 13.500l.8-3.500L15.500 2l2.500 2.500L10.500 12.500z" fill="#fff" /><path d="M16.300 1.200l1-1L20 2.700l-1.200 1z" fill="#fff" /></svg>
                  </Pill>
                  <Pill $bg="#f24841" $w={43}>
                    <svg width="18" height="20" viewBox="0 0 18 20"><path d="M9 2.500C6 2.500 4.300 5 4.300 8v5.500L2 15.500h14l-2.300-2V8C13.700 5 12 2.500 9 2.500z" fill="none" stroke="#fff" strokeWidth="1.700" /><path d="M9 .5v2" stroke="#fff" strokeWidth="2" /><path d="M7 17.500h4a2 2 0 01-4 0z" fill="#fff" /></svg>
                  </Pill>
                  <Pill $bg="#444" $w={42}>
                    <svg width="18" height="18" viewBox="0 0 18 18"><path d="M1 9h15M9 1.800L16.200 9 9 16.200" fill="none" stroke="#fff" strokeWidth="2" /></svg>
                  </Pill>
                </Btns>
              </Row>
            );
          })}
        </List>
        <Track $pt={6}><Arrow /><Thumb $h={101} $mt={17} /><DownSlot><Arrow down /></DownSlot></Track>
      </PanelMain>
      <Fab><svg width="14" height="14"><path d="M7 0v14M0 7h14" stroke="#fff" strokeWidth="2" /></svg></Fab>
    </Panel>
  );
}

export default function App() {
  return (
    <Screen>
      <Global />
      <TabStrip />
      <BrowserToolbar />
      <Bookmarks />
      <Body>
        <SiteView />
        <Reminders />
        <Track $pt={7}><Arrow /><Thumb $h={248} $mt={673} /><DownSlot><Arrow down c="#a3a3a3" /></DownSlot></Track>
      </Body>
    </Screen>
  );
}
